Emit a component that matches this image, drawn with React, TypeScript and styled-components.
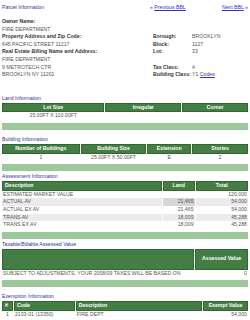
import React from 'react'
import styled, { createGlobalStyle } from 'styled-components'

const GlobalStyle = createGlobalStyle`
  html, body {
    margin: 0;
    padding: 0;
    background: #ffffff;
  }
  body {
    font-family: 'Liberation Sans', Arial, sans-serif;
    font-size: 5.2px;
    color: #555555;
  }
`

type Align = 'left' | 'center' | 'right'

interface Column {
  label: string
  width: string
  align?: Align
}

interface Cell {
  text: string
  align?: Align
  hot?: boolean
}

const Page = styled.div`
  padding: 4px 2px 0 2px;
  line-height: 7.6px;
`
const TopBar = styled.div`
  display: flex;
  align-items: center;
  height: 8px;
`
const Title = styled.div`
  color: #333399;
`
const Nav = styled.div`
  margin-left: auto;
  width: 98px;
  display: flex;
  justify-content: space-between;
  color: #3333cc;
`
const Link = styled.a`
  color: #3333cc;
  text-decoration: underline;
`
const Label = styled.span`
  font-weight: bold;
  color: #333333;
`
const InfoGrid = styled.div`
  margin-top: 6px;
  display: grid;
  grid-template-columns: 151px 39px 1fr;
  grid-auto-rows: 7.6px;
  white-space: nowrap;
`
const SectionTitle = styled.div<{ $top: number }>`
  margin-top: ${p => p.$top}px;
  margin-bottom: 1px;
  color: #333399;
  line-height: 7px;
`
const Table = styled.table`
  table-layout: fixed;
  border-collapse: separate;
  border-spacing: 1px 0;
  margin-left: -1px;
  width: calc(100% + 2px);
  td {
    padding: 0;
  }
`
const Head = styled.th<{ $align: Align; $height: number }>`
  height: ${p => p.$height}px;
  padding: 0 2px;
  background: #457e45;
  border: 1px solid #2f672f;
  color: #ffffff;
  font-weight: bold;
  text-align: ${p => p.$align};
  white-space: nowrap;
  overflow: hidden;
`
const Row = styled.tr<{ $gray: boolean }>`
  background: ${p => (p.$gray ? '#ebebeb' : 'transparent')};
`
const Data = styled.td<{ $align: Align; $hot?: boolean }>`
  && {
    height: 7.5px;
    padding: 0 1px;
  }
  text-align: ${p => p.$align};
  background: ${p => (p.$hot ? '#d6d6d6' : 'transparent')};
  white-space: nowrap;
`
const Bar = styled.div`
  margin-top: 3px;
  height: 7px;
  background: #9cc89c;
`

const DataTable: React.FC<{
  columns: Column[]
  rows: Cell[][]
  headHeight?: number
  striped?: boolean
}> = ({ columns, rows, headHeight = 7, striped }) => (
  <Table>
    <colgroup>
      {columns.map((c, i) => (
        <col key={i} style={{ width: c.width }} />
      ))}
    </colgroup>
    <thead>
      <tr>
        {columns.map((c, i) => (
          <Head key={i} $align={c.align || 'center'} $height={headHeight}>
            {c.label}
          </Head>
        ))}
      </tr>
    </thead>
    <tbody>
      {rows.map((r, i) => (
        <Row key={i} $gray={!!striped && i % 2 === 1}>
          {r.map((c, j) => (
            <Data key={j} $align={c.align || 'left'} $hot={c.hot}>
              {c.text}
            </Data>
          ))}
        </Row>
      ))}
      <tr>
        <td colSpan={columns.length}>
          <Bar />
        </td>
      </tr>
    </tbody>
  </Table>
)

const App: React.FC = () => {
  const infoRows: Array<[React.ReactNode, string?, React.ReactNode?]> = [
    [<Label>Owner Name:</Label>],
    ['FIRE DEPARTMENT'],
    [<Label>Property Address and Zip Code:</Label>, 'Borough:', 'BROOKLYN'],
    ['645 PACIFIC STREET 11217', 'Block:', '1127'],
    [<Label>Real Estate Billing Name and Address:</Label>, 'Lot:', '33'],
    ['FIRE DEPARTMENT'],
    ['9 METROTECH CTR', 'Tax Class:', '4'],
    ['BROOKLYN NY 11201', 'Building Class:', <>Y1 <Link href="#">Codes</Link></>],
  ]

  return (
    <Page>
      <GlobalStyle />
      <TopBar>
        <Title>Parcel Information</Title>
        <Nav>
          <span>
            « <Link href="#">Previous BBL</Link>
          </span>
          <span>
            <Link href="#">Next BBL</Link> »
          </span>
        </Nav>
      </TopBar>

      <InfoGrid>
        {infoRows.map(([left, label, value], i) => (
          <React.Fragment key={i}>
            <div>{left}</div>
            <Label>{label}</Label>
            <div>{value}</div>
          </React.Fragment>
        ))}
      </InfoGrid>

      <SectionTitle $top={16}>Land Information</SectionTitle>
      <DataTable
        columns={[
          { label: 'Lot Size', width: '42%' },
          { label: 'Irregular', width: '31%' },
          { label: 'Corner', width: '27%' },
        ]}
        rows={[[{ text: '25.00FT X 110.00FT', align: 'center' }, { text: '' }, { text: '' }]]}
      />

      <SectionTitle $top={6}>Building Information</SectionTitle>
      <DataTable
        columns={[
          { label: 'Number of Buildings', width: '32%' },
          { label: 'Building Size', width: '27%' },
          { label: 'Extension', width: '18%' },
          { label: 'Stories', width: '23%' },
        ]}
        rows={[
          [
            { text: '1', align: 'center' },
            { text: '25.00FT X 50.00FT', align: 'center' },
            { text: 'E', align: 'center' },
            { text: '2', align: 'center' },
          ],
        ]}
      />

      <SectionTitle $top={2}>Assessment Information</SectionTitle>
      <DataTable
        striped
        columns={[
          { label: 'Description', width: '65.5%', align: 'left' },
          { label: 'Land', width: '13%' },
          { label: 'Total', width: '21.5%' },
        ]}
        rows={[
          ['ESTIMATED MARKET VALUE', '', '120,000'],
          ['ACTUAL AV', '21,465', '54,000'],
          ['ACTUAL EX AV', '21,465', '54,000'],
          ['TRANS AV', '18,009', '45,288'],
          ['TRANS EX AV', '18,009', '45,288'],
        ].map((r, i) => [
          { text: r[0] },
          { text: r[1], align: 'right' as Align, hot: i === 1 },
          { text: r[2], align: 'right' as Align },
        ])}
      />

      <SectionTitle $top={2}>Taxable/Billable Assessed Value</SectionTitle>
      <DataTable
        headHeight={19}
        columns={[
          { label: '', width: '78.5%' },
          { label: 'Assessed Value', width: '21.5%' },
        ]}
        rows={[
          [
            { text: 'SUBJECT TO ADJUSTMENTS, YOUR 2008/09 TAXES WILL BE BASED ON' },
            { text: '0', align: 'right' },
          ],
        ]}
      />

      <SectionTitle $top={6}>Exemption Information</SectionTitle>
      <DataTable
        columns={[
          { label: '#', width: '4.5%', align: 'left' },
          { label: 'Code', width: '25%', align: 'left' },
          { label: 'Description', width: '52%', align: 'left' },
          { label: 'Exempt Value', width: '18.5%' },
        ]}
        rows={[
          [
            { text: '1', align: 'center' },
            { text: '2133-01 (13350)' },
            { text: 'FIRE DEPT' },
            { text: '54,000', align: 'right' },
          ],
        ]}
      />
    </Page>
  )
}

export default App
